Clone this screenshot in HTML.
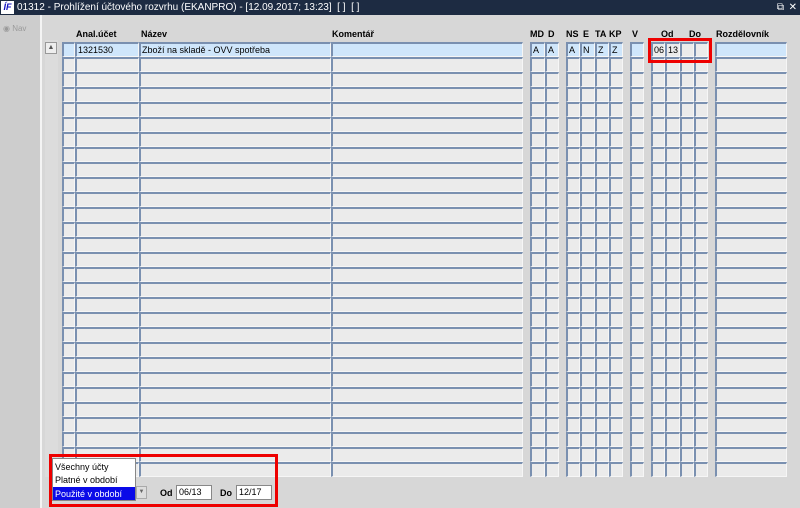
<!DOCTYPE html>
<html><head><meta charset="utf-8"><style>
*{box-sizing:border-box;margin:0;padding:0}
body{width:800px;height:508px;overflow:hidden;background:#d7d7d7;font-family:"Liberation Sans",sans-serif;font-size:9px;color:#000;position:relative}
#title{position:absolute;left:0;top:0;width:800px;height:15px;background:#1d2b42;color:#fff;font-size:10px;line-height:15px;padding-left:17px}
#logo{position:absolute;left:1px;top:1px;width:13px;height:13px;background:#fff;color:#1010c0;font-size:9px;font-weight:bold;font-style:italic;line-height:13px;text-align:center}
#left{position:absolute;left:0;top:15px;width:40px;height:493px;background:#cdcdcd}
#nav{position:absolute;left:3px;top:24px;color:#9a9a9a;font-size:8px}
#wl{position:absolute;left:40px;top:15px;width:2px;height:493px;background:#f4f4f4}
#sb{position:absolute;left:45px;top:40px;width:13px;height:437px;background:#dcdcdc}
.h{position:absolute;top:29px;font-weight:bold;font-size:9px}
.c{position:absolute;height:15px;background:#ebebeb;border-top:2px solid #7a90b0;border-left:2px solid #7a90b0;border-right:1px solid #f6f6f6;border-bottom:1px solid #f6f6f6;padding-left:1px;line-height:12px;font-size:9px}
.b{background:#cfe6fb}
.red{position:absolute;border:3px solid #e00}
</style></head><body>
<div id="title"><div id="logo">ÍF</div>01312 - Prohlížení účtového rozvrhu (EKANPRO) - [12.09.2017; 13:23]&nbsp; [ ]&nbsp; [ ]<span style="position:absolute;right:16px;top:0">⧉</span><span style="position:absolute;right:3px;top:0">✕</span></div>
<div id="left"></div><div id="wl"></div>
<div id="nav">◉ Nav</div>
<div id="sb"></div>
<div style="position:absolute;left:45px;top:42px;width:12px;height:12px;background:#eee;border:1px solid #999;font-size:7px;text-align:center;line-height:10px;color:#555">▲</div>
<div class="h" style="left:76px">Anal.účet</div>
<div class="h" style="left:141px">Název</div>
<div class="h" style="left:332px">Komentář</div>
<div class="h" style="left:530px">MD</div>
<div class="h" style="left:548px">D</div>
<div class="h" style="left:566px">NS</div>
<div class="h" style="left:583px">E</div>
<div class="h" style="left:595px">TA</div>
<div class="h" style="left:609px">KP</div>
<div class="h" style="left:632px">V</div>
<div class="h" style="left:661px">Od</div>
<div class="h" style="left:689px">Do</div>
<div class="h" style="left:716px">Rozdělovník</div>
<div id="g"></div>
<script>
var cols=[[62,13],[75,64],[139,192],[331,192],[530,15],[545,14],[566,14],[580,15],[595,14],[609,14],[630,14],[651,14],[665,15],[680,14],[694,14],[715,72]];
var t0=["","1321530","Zboží na skladě - OVV spotřeba","","A","A","A","N","Z","Z","","06","13","","",""];
var h="";
for(var r=0;r<29;r++){var y=42+r*15;for(var i=0;i<cols.length;i++){var cl="c"+(r==0&&[0,1,2,3,4,5,6,7,8,9,10,15].indexOf(i)>=0?" b":"");h+='<div class="'+cl+'" style="left:'+cols[i][0]+'px;top:'+y+'px;width:'+cols[i][1]+'px">'+(r==0?t0[i]:"")+'</div>';}}
document.getElementById("g").innerHTML=h;
</script>
<div style="position:absolute;left:52px;top:458px;width:84px;height:43px;background:#fff;border:1px solid #888;font-size:9px">
<div style="padding:3px 2px;height:14px">Všechny účty</div>
<div style="padding:2px 2px;height:14px">Platné v období</div>
<div style="padding:2px 2px;height:13px;background:#0a0ae8;color:#fff">Použité v období</div></div>
<div style="position:absolute;left:136px;top:486px;width:11px;height:13px;background:#ddd;border:1px solid #aaa;font-size:6px;color:#666;text-align:center;line-height:11px">▼</div>
<div style="position:absolute;left:160px;top:488px;font-weight:bold">Od</div>
<div style="position:absolute;left:176px;top:485px;width:36px;height:15px;background:#fff;border:1px solid #888;padding-left:2px;line-height:13px">06/13</div>
<div style="position:absolute;left:220px;top:488px;font-weight:bold">Do</div>
<div style="position:absolute;left:236px;top:485px;width:36px;height:15px;background:#fff;border:1px solid #888;padding-left:2px;line-height:13px">12/17</div>
<div class="red" style="left:49px;top:454px;width:229px;height:53px"></div>
<div class="red" style="left:648px;top:38px;width:64px;height:25px"></div>
</body></html>
